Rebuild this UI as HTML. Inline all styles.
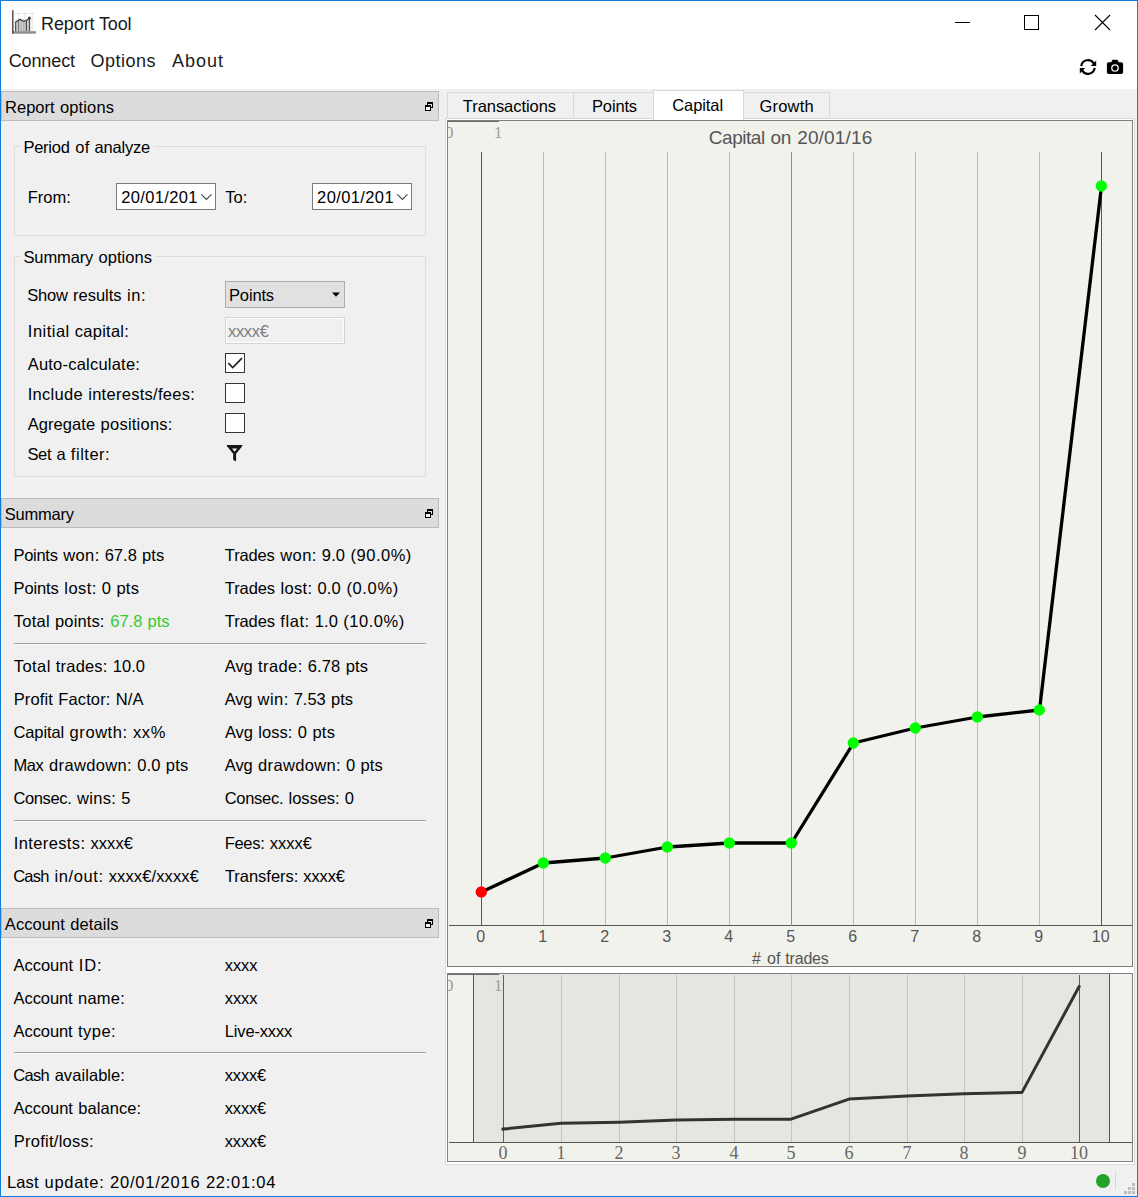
<!DOCTYPE html>
<html><head><meta charset="utf-8"><title>Report Tool</title>
<style>
html,body{margin:0;padding:0;}
body{width:1138px;height:1197px;overflow:hidden;background:#f0f0f0;font-family:"Liberation Sans",sans-serif;}
#w{position:absolute;left:0;top:0;width:1138px;height:1197px;overflow:hidden;background:#f0f0f0;}
.t{position:absolute;white-space:pre;line-height:normal;}
.b{position:absolute;box-sizing:border-box;}
svg{position:absolute;left:0;top:0;overflow:visible;}
</style></head><body><div id="w">
<div class="b" style="left:0px;top:0px;width:1138px;height:89px;background:#fff;"></div>
<div class="b" style="left:1px;top:91px;width:438px;height:30px;background:#dcdcdc;border:1px solid #bcbcbc;"></div>
<div class="b" style="left:1px;top:498px;width:438px;height:30px;background:#dcdcdc;border:1px solid #bcbcbc;"></div>
<div class="b" style="left:1px;top:908px;width:438px;height:30px;background:#dcdcdc;border:1px solid #bcbcbc;"></div>
<div class="b" style="left:14px;top:146px;width:412px;height:90px;border:1px solid #dcdcdc;"></div>
<div class="b" style="left:14px;top:256px;width:412px;height:221px;border:1px solid #dcdcdc;"></div>
<div class="b" style="left:20px;top:137px;width:134px;height:18px;background:#f0f0f0;"></div>
<div class="b" style="left:20px;top:247px;width:135px;height:18px;background:#f0f0f0;"></div>
<div class="b" style="left:116px;top:183px;width:100px;height:27px;background:#fff;border:1px solid #7a7a7a;"></div>
<div class="b" style="left:312px;top:183px;width:100px;height:27px;background:#fff;border:1px solid #7a7a7a;"></div>
<div class="b" style="left:225px;top:281px;width:120px;height:27px;background:#e1e1e1;border:1px solid #adadad;"></div>
<div class="b" style="left:225px;top:317px;width:120px;height:27px;background:#f0f0f0;border:1px solid #d4d4d4;box-shadow:inset 0 0 0 1px #fcfcfc;"></div>
<div class="b" style="left:225px;top:353px;width:20px;height:20px;background:#fff;border:1px solid #333;"></div>
<div class="b" style="left:225px;top:383px;width:20px;height:20px;background:#fff;border:1px solid #333;"></div>
<div class="b" style="left:225px;top:413px;width:20px;height:20px;background:#fff;border:1px solid #333;"></div>
<div class="b" style="left:14px;top:643px;width:412px;height:1px;background:#a0a0a0;"></div>
<div class="b" style="left:14px;top:644px;width:412px;height:1px;background:#f8f8f8;"></div>
<div class="b" style="left:14px;top:820px;width:412px;height:1px;background:#a0a0a0;"></div>
<div class="b" style="left:14px;top:821px;width:412px;height:1px;background:#f8f8f8;"></div>
<div class="b" style="left:14px;top:1052px;width:412px;height:1px;background:#a0a0a0;"></div>
<div class="b" style="left:14px;top:1053px;width:412px;height:1px;background:#f8f8f8;"></div>
<div class="b" style="left:445px;top:118px;width:690px;height:1047px;background:#fff;border:1px solid #dadada;"></div>
<div class="b" style="left:447px;top:92px;width:127px;height:27px;background:#f0f0f0;border:1px solid #d9d9d9;"></div>
<div class="b" style="left:573px;top:92px;width:82px;height:27px;background:#f0f0f0;border:1px solid #d9d9d9;"></div>
<div class="b" style="left:743px;top:92px;width:87px;height:27px;background:#f0f0f0;border:1px solid #d9d9d9;"></div>
<div class="b" style="left:653px;top:90px;width:91px;height:30px;background:#fff;border:1px solid #d9d9d9;border-bottom:none;"></div>
<div class="b" style="left:447px;top:120px;width:686px;height:847px;background:#f2f2ed;border:1px solid #7f7f7f;"></div>
<div class="b" style="left:447px;top:973px;width:686px;height:189px;background:#f2f2ed;border:1px solid #7f7f7f;"></div>
<div class="b" style="left:473px;top:974px;width:637px;height:168px;background:#e6e6e1;border-left:1px solid #555;border-right:1px solid #555;"></div>
<svg width="1138" height="1197" viewBox="0 0 1138 1197">
<rect x="481" y="152" width="1" height="774" fill="#555"/>
<rect x="543" y="152" width="1" height="774" fill="#bbbbb7"/>
<rect x="605" y="152" width="1" height="774" fill="#bbbbb7"/>
<rect x="667" y="152" width="1" height="774" fill="#bbbbb7"/>
<rect x="729" y="152" width="1" height="774" fill="#bbbbb7"/>
<rect x="853" y="152" width="1" height="774" fill="#bbbbb7"/>
<rect x="915" y="152" width="1" height="774" fill="#bbbbb7"/>
<rect x="977" y="152" width="1" height="774" fill="#bbbbb7"/>
<rect x="1039" y="152" width="1" height="774" fill="#bbbbb7"/>
<rect x="1101" y="152" width="1" height="774" fill="#555"/>
<rect x="449" y="925" width="683" height="1" fill="#555"/>
<rect x="448" y="121" width="51" height="1" fill="#6a6a6a"/>
<polyline points="481.5,892 543.5,863 605.5,858 667.5,847 729.5,843 791.5,843 853.5,743 915.5,728 977.5,717 1039.5,710 1101.5,186" fill="none" stroke="#000" stroke-width="3.3" stroke-linejoin="round" stroke-linecap="round"/>
<circle cx="481.3" cy="892" r="5.7" fill="#ff0000"/>
<circle cx="543.3" cy="863" r="5.7" fill="#00ff00"/>
<circle cx="605.3" cy="858" r="5.7" fill="#00ff00"/>
<circle cx="667.3" cy="847" r="5.7" fill="#00ff00"/>
<circle cx="729.3" cy="843" r="5.7" fill="#00ff00"/>
<circle cx="791.3" cy="843" r="5.7" fill="#00ff00"/>
<circle cx="853.3" cy="743" r="5.7" fill="#00ff00"/>
<circle cx="915.3" cy="728" r="5.7" fill="#00ff00"/>
<circle cx="977.3" cy="717" r="5.7" fill="#00ff00"/>
<circle cx="1039.3" cy="710" r="5.7" fill="#00ff00"/>
<circle cx="1101.3" cy="186" r="5.7" fill="#00ff00"/>
<rect x="791" y="152" width="1" height="774" fill="#ff5a6e"/>
<rect x="503" y="975" width="1" height="168" fill="#5c5c5c"/>
<rect x="561" y="975" width="1" height="168" fill="#c3c3bf"/>
<rect x="619" y="975" width="1" height="168" fill="#c3c3bf"/>
<rect x="676" y="975" width="1" height="168" fill="#c3c3bf"/>
<rect x="734" y="975" width="1" height="168" fill="#c3c3bf"/>
<rect x="791" y="975" width="1" height="168" fill="#c3c3bf"/>
<rect x="849" y="975" width="1" height="168" fill="#c3c3bf"/>
<rect x="907" y="975" width="1" height="168" fill="#c3c3bf"/>
<rect x="964" y="975" width="1" height="168" fill="#c3c3bf"/>
<rect x="1022" y="975" width="1" height="168" fill="#c3c3bf"/>
<rect x="1079" y="975" width="1" height="168" fill="#5c5c5c"/>
<rect x="449" y="1142" width="683" height="1" fill="#555"/>
<rect x="448" y="974" width="51" height="1" fill="#6a6a6a"/>
<polyline points="503.0,1129.1 561.0,1123.3 619.0,1122.2 676.0,1120.0 734.0,1119.2 791.0,1119.2 849.0,1099.1 907.0,1096.0 964.0,1093.8 1022.0,1092.4 1079.0,986.8" fill="none" stroke="#333" stroke-width="3" stroke-linejoin="round" stroke-linecap="square"/>
<g fill="none"><path d="M18.400 12v19M24.600 12v19M32.200 12v19M14 13.500h20M14 19.500h20M14 27.100h20" stroke="#e6e6e6" stroke-width="1"/><path d="M15 22.500l5-3.200l3.700 2l2.600-.6l3.100-2.700l.6 13.300h-15z" fill="#cfcfcf"/><path d="M15.600 22.500v9M26.400 20.800v10.500M29.500 19v12.300" stroke="#555" stroke-width="1.300"/><path d="M18.500 20.500v11" stroke="#7a7a7a" stroke-width="1.200"/><path d="M21.200 20.500v11M23.800 21.200v10" stroke="#aaa" stroke-width="1.200"/><rect x="12" y="31.200" width="24" height="2.500" fill="#8e8e8e"/><rect x="12.100" y="10.200" width="1.400" height="23.500" fill="#484848"/><path d="M15 22.500l5-3.200l3.700 2l2.600-.6l3.100-2.800" stroke="#4a4a4a" stroke-width="1.400"/><circle cx="29.400" cy="18" r="1.500" fill="#3a3a3a"/></g>
<rect x="955" y="22" width="15" height="1" fill="#000"/>
<rect x="1024.5" y="15.5" width="14" height="14" fill="none" stroke="#000" stroke-width="1"/>
<path d="M1095 15l15 15M1110 15l-15 15" stroke="#000" stroke-width="1.1" fill="none"/>
<g fill="none" stroke="#000" stroke-width="2.1"><path d="M1081.270 66.050a6.800 6.800 0 0 1 12.620-2.450"/><path d="M1094.730 67.950a6.800 6.800 0 0 1 -12.620 2.450"/></g><path d="M1096.200 60.600v5.400h-5.400z" fill="#000"/><path d="M1079.800 73.400v-5.400h5.400z" fill="#000"/>
<path d="M1108.6 62.2h2.6l1.1-2.1q.2-.4.7-.4h4q.5 0 .7.4l1.1 2.100h2.600q1.700 0 1.700 1.700v8.400q0 1.700-1.700 1.700h-12.800q-1.700 0-1.700-1.700v-8.400q0-1.700 1.700-1.700z" fill="#000"/><circle cx="1115" cy="68" r="3.2" fill="none" stroke="#fff" stroke-width="1.3"/>
<g fill="none" stroke="#000" stroke-width="1"><rect x="427.5" y="102.5" width="5" height="5"/><rect x="427" y="102" width="6" height="2" fill="#000" stroke="none"/><rect x="425.5" y="105.5" width="5" height="5" fill="#f4f4f4"/><rect x="425" y="105" width="6" height="2" fill="#000" stroke="none"/></g>
<g fill="none" stroke="#000" stroke-width="1"><rect x="427.5" y="509.5" width="5" height="5"/><rect x="427" y="509" width="6" height="2" fill="#000" stroke="none"/><rect x="425.5" y="512.5" width="5" height="5" fill="#f4f4f4"/><rect x="425" y="512" width="6" height="2" fill="#000" stroke="none"/></g>
<g fill="none" stroke="#000" stroke-width="1"><rect x="427.5" y="919.5" width="5" height="5"/><rect x="427" y="919" width="6" height="2" fill="#000" stroke="none"/><rect x="425.5" y="922.5" width="5" height="5" fill="#f4f4f4"/><rect x="425" y="922" width="6" height="2" fill="#000" stroke="none"/></g>
<path d="M201.3 194.300l5.100 5.100l5.100-5.100" fill="none" stroke="#444" stroke-width="1.1"/>
<path d="M397.3 194.300l5.100 5.100l5.100-5.100" fill="none" stroke="#444" stroke-width="1.1"/>
<path d="M332 292.500h8l-4 4.200z" fill="#000"/>
<path d="M228.300 363.200l4.400 4.300l9.300-9.300" fill="none" stroke="#222" stroke-width="1.7"/>
<path d="M227.300 445h14.500q.6 0 .6 .6v.5l-6.300 7.600v7q0 .7-.8 .4l-1.600-.9q-.5-.3-.5-.9v-5.600l-6.400-7.600v-.5q0-.6.5-.6z" fill="#161616"/><path d="M232 448.500h5.200l-2.600 3.300z" fill="#f0f0f0"/>
<circle cx="1103" cy="1181" r="7" fill="#22a228"/>
<rect x="1115" y="1171" width="1" height="19" fill="#d8d8d8"/>
<rect x="1132" y="1183" width="3" height="3" fill="#bfbfbf"/>
<rect x="1128" y="1187" width="3" height="3" fill="#bfbfbf"/>
<rect x="1132" y="1187" width="3" height="3" fill="#bfbfbf"/>
<rect x="1124" y="1191" width="3" height="3" fill="#bfbfbf"/>
<rect x="1128" y="1191" width="3" height="3" fill="#bfbfbf"/>
<rect x="1132" y="1191" width="3" height="3" fill="#bfbfbf"/>
</svg>
<span class="t" style="left:41.10px;top:13.71px;font-size:18px;letter-spacing:-0.125px;color:#1a1a1a;font-family:'Liberation Sans',sans-serif;">Report Tool</span>
<span class="t" style="left:8.70px;top:50.71px;font-size:18px;letter-spacing:-0.117px;color:#1a1a1a;font-family:'Liberation Sans',sans-serif;">Connect</span>
<span class="t" style="left:90.40px;top:50.71px;font-size:18px;letter-spacing:0.517px;color:#1a1a1a;font-family:'Liberation Sans',sans-serif;">Options</span>
<span class="t" style="left:171.90px;top:50.71px;font-size:18px;letter-spacing:1.025px;color:#1a1a1a;font-family:'Liberation Sans',sans-serif;">About</span>
<span class="t" style="left:5.10px;top:98.07px;font-size:16.5px;letter-spacing:0.004px;color:#000;">Report</span><span class="t" style="left:59.98px;top:98.07px;font-size:16.5px;letter-spacing:0.126px;color:#000;">options</span>
<span class="t" style="left:4.70px;top:505.07px;font-size:16.5px;letter-spacing:-0.199px;color:#000;">Summary</span>
<span class="t" style="left:4.83px;top:915.07px;font-size:16.5px;letter-spacing:0.051px;color:#000;">Account</span><span class="t" style="left:70.16px;top:915.07px;font-size:16.5px;letter-spacing:0.115px;color:#000;">details</span>
<span class="t" style="left:23.38px;top:138.07px;font-size:16.5px;letter-spacing:-0.233px;color:#000;">Period</span><span class="t" style="left:75.19px;top:138.07px;font-size:16.5px;letter-spacing:0.316px;color:#000;">of</span><span class="t" style="left:94.55px;top:138.07px;font-size:16.5px;letter-spacing:-0.211px;color:#000;">analyze</span>
<span class="t" style="left:23.44px;top:248.07px;font-size:16.5px;letter-spacing:-0.120px;color:#000;">Summary</span><span class="t" style="left:98.49px;top:248.07px;font-size:16.5px;letter-spacing:0.048px;color:#000;">options</span>
<span class="t" style="left:27.63px;top:188.07px;font-size:16.5px;letter-spacing:0.057px;color:#000;">From:</span>
<span class="t" style="left:121.27px;top:188.07px;font-size:16.5px;letter-spacing:0.339px;color:#000;">20/01/201</span>
<span class="t" style="left:225.16px;top:188.07px;font-size:16.5px;letter-spacing:0.116px;color:#000;">To:</span>
<span class="t" style="left:317.09px;top:188.07px;font-size:16.5px;letter-spacing:0.384px;color:#000;">20/01/201</span>
<span class="t" style="left:27.37px;top:286.07px;font-size:16.5px;letter-spacing:-0.257px;color:#000;">Show</span><span class="t" style="left:72.98px;top:286.07px;font-size:16.5px;letter-spacing:0.004px;color:#000;">results</span><span class="t" style="left:127.12px;top:286.07px;font-size:16.5px;letter-spacing:0.564px;color:#000;">in:</span>
<span class="t" style="left:229.02px;top:286.07px;font-size:16.5px;letter-spacing:-0.160px;color:#000;">Points</span>
<span class="t" style="left:27.84px;top:322.07px;font-size:16.5px;letter-spacing:0.475px;color:#000;">Initial</span><span class="t" style="left:74.84px;top:322.07px;font-size:16.5px;letter-spacing:0.245px;color:#000;">capital:</span>
<span class="t" style="left:227.95px;top:322.07px;font-size:16.5px;letter-spacing:-0.305px;color:#7e7e7e;">xxxx€</span>
<span class="t" style="left:27.71px;top:355.07px;font-size:16.5px;letter-spacing:0.215px;color:#000;">Auto-calculate:</span>
<span class="t" style="left:27.74px;top:385.07px;font-size:16.5px;letter-spacing:0.282px;color:#000;">Include</span><span class="t" style="left:88.20px;top:385.07px;font-size:16.5px;letter-spacing:0.279px;color:#000;">interests/fees:</span>
<span class="t" style="left:27.64px;top:415.07px;font-size:16.5px;letter-spacing:0.078px;color:#000;">Agregate</span><span class="t" style="left:100.61px;top:415.07px;font-size:16.5px;letter-spacing:0.226px;color:#000;">positions:</span>
<span class="t" style="left:27.43px;top:445.07px;font-size:16.5px;letter-spacing:-0.338px;color:#000;">Set</span><span class="t" style="left:56.39px;top:445.07px;font-size:16.5px;letter-spacing:-0.382px;color:#000;">a</span><span class="t" style="left:70.87px;top:445.07px;font-size:16.5px;letter-spacing:0.513px;color:#000;">filter:</span>
<span class="t" style="left:13.46px;top:546.07px;font-size:16.5px;letter-spacing:-0.279px;color:#000;">Points</span><span class="t" style="left:63.18px;top:546.07px;font-size:16.5px;letter-spacing:0.412px;color:#000;">won:</span><span class="t" style="left:104.67px;top:546.07px;font-size:16.5px;letter-spacing:0.026px;color:#000;">67.8</span><span class="t" style="left:142.08px;top:546.07px;font-size:16.5px;letter-spacing:0.044px;color:#000;">pts</span>
<span class="t" style="left:224.83px;top:546.07px;font-size:16.5px;letter-spacing:-0.139px;color:#000;">Trades</span><span class="t" style="left:280.23px;top:546.07px;font-size:16.5px;letter-spacing:0.441px;color:#000;">won:</span><span class="t" style="left:321.87px;top:546.07px;font-size:16.5px;letter-spacing:0.097px;color:#000;">9.0</span><span class="t" style="left:350.51px;top:546.07px;font-size:16.5px;letter-spacing:0.510px;color:#000;">(90.0%)</span>
<span class="t" style="left:13.54px;top:579.07px;font-size:16.5px;letter-spacing:-0.111px;color:#000;">Points</span><span class="t" style="left:64.31px;top:579.07px;font-size:16.5px;letter-spacing:0.423px;color:#000;">lost:</span><span class="t" style="left:101.82px;top:579.07px;font-size:16.5px;letter-spacing:0.094px;color:#000;">0</span><span class="t" style="left:116.46px;top:579.07px;font-size:16.5px;letter-spacing:0.212px;color:#000;">pts</span>
<span class="t" style="left:224.85px;top:579.07px;font-size:16.5px;letter-spacing:-0.094px;color:#000;">Trades</span><span class="t" style="left:280.48px;top:579.07px;font-size:16.5px;letter-spacing:0.334px;color:#000;">lost:</span><span class="t" style="left:317.54px;top:579.07px;font-size:16.5px;letter-spacing:0.140px;color:#000;">0.0</span><span class="t" style="left:346.38px;top:579.07px;font-size:16.5px;letter-spacing:0.657px;color:#000;">(0.0%)</span>
<span class="t" style="left:13.74px;top:612.07px;font-size:16.5px;letter-spacing:0.290px;color:#000;">Total</span><span class="t" style="left:55.08px;top:612.07px;font-size:16.5px;letter-spacing:0.118px;color:#000;">points:</span>
<span class="t" style="left:224.84px;top:612.07px;font-size:16.5px;letter-spacing:-0.128px;color:#000;">Trades</span><span class="t" style="left:280.35px;top:612.07px;font-size:16.5px;letter-spacing:0.544px;color:#000;">flat:</span><span class="t" style="left:314.66px;top:612.07px;font-size:16.5px;letter-spacing:0.108px;color:#000;">1.0</span><span class="t" style="left:343.33px;top:612.07px;font-size:16.5px;letter-spacing:0.522px;color:#000;">(10.0%)</span>
<span class="t" style="left:13.81px;top:657.07px;font-size:16.5px;letter-spacing:0.421px;color:#000;">Total</span><span class="t" style="left:55.86px;top:657.07px;font-size:16.5px;letter-spacing:0.180px;color:#000;">trades:</span><span class="t" style="left:112.71px;top:657.07px;font-size:16.5px;letter-spacing:0.065px;color:#000;">10.0</span>
<span class="t" style="left:224.83px;top:657.07px;font-size:16.5px;letter-spacing:-0.131px;color:#000;">Avg</span><span class="t" style="left:258.09px;top:657.07px;font-size:16.5px;letter-spacing:0.398px;color:#000;">trade:</span><span class="t" style="left:307.78px;top:657.07px;font-size:16.5px;letter-spacing:0.126px;color:#000;">6.78</span><span class="t" style="left:345.65px;top:657.07px;font-size:16.5px;letter-spacing:0.135px;color:#000;">pts</span>
<span class="t" style="left:13.67px;top:690.07px;font-size:16.5px;letter-spacing:0.137px;color:#000;">Profit</span><span class="t" style="left:58.27px;top:690.07px;font-size:16.5px;letter-spacing:0.127px;color:#000;">Factor:</span><span class="t" style="left:115.75px;top:690.07px;font-size:16.5px;letter-spacing:0.099px;color:#000;">N/A</span>
<span class="t" style="left:224.76px;top:690.07px;font-size:16.5px;letter-spacing:-0.279px;color:#000;">Avg</span><span class="t" style="left:257.59px;top:690.07px;font-size:16.5px;letter-spacing:0.455px;color:#000;">win:</span><span class="t" style="left:293.69px;top:690.07px;font-size:16.5px;letter-spacing:-0.006px;color:#000;">7.53</span><span class="t" style="left:330.95px;top:690.07px;font-size:16.5px;letter-spacing:0.015px;color:#000;">pts</span>
<span class="t" style="left:13.54px;top:723.07px;font-size:16.5px;letter-spacing:-0.129px;color:#000;">Capital</span><span class="t" style="left:69.60px;top:723.07px;font-size:16.5px;letter-spacing:0.562px;color:#000;">growth:</span><span class="t" style="left:132.95px;top:723.07px;font-size:16.5px;letter-spacing:0.652px;color:#000;">xx%</span>
<span class="t" style="left:224.88px;top:723.07px;font-size:16.5px;letter-spacing:-0.039px;color:#000;">Avg</span><span class="t" style="left:258.25px;top:723.07px;font-size:16.5px;letter-spacing:0.070px;color:#000;">loss:</span><span class="t" style="left:297.84px;top:723.07px;font-size:16.5px;letter-spacing:0.089px;color:#000;">0</span><span class="t" style="left:312.47px;top:723.07px;font-size:16.5px;letter-spacing:0.209px;color:#000;">pts</span>
<span class="t" style="left:13.42px;top:756.07px;font-size:16.5px;letter-spacing:-0.364px;color:#000;">Max</span><span class="t" style="left:49.10px;top:756.07px;font-size:16.5px;letter-spacing:0.347px;color:#000;">drawdown:</span><span class="t" style="left:137.18px;top:756.07px;font-size:16.5px;letter-spacing:0.169px;color:#000;">0.0</span><span class="t" style="left:165.85px;top:756.07px;font-size:16.5px;letter-spacing:0.136px;color:#000;">pts</span>
<span class="t" style="left:224.83px;top:756.07px;font-size:16.5px;letter-spacing:-0.136px;color:#000;">Avg</span><span class="t" style="left:258.04px;top:756.07px;font-size:16.5px;letter-spacing:0.341px;color:#000;">drawdown:</span><span class="t" style="left:345.98px;top:756.07px;font-size:16.5px;letter-spacing:-0.007px;color:#000;">0</span><span class="t" style="left:360.46px;top:756.07px;font-size:16.5px;letter-spacing:0.131px;color:#000;">pts</span>
<span class="t" style="left:13.42px;top:789.07px;font-size:16.5px;letter-spacing:-0.368px;color:#000;">Consec.</span><span class="t" style="left:76.98px;top:789.07px;font-size:16.5px;letter-spacing:0.337px;color:#000;">wins:</span><span class="t" style="left:121.37px;top:789.07px;font-size:16.5px;letter-spacing:0.020px;color:#000;">5</span>
<span class="t" style="left:224.75px;top:789.07px;font-size:16.5px;letter-spacing:-0.300px;color:#000;">Consec.</span><span class="t" style="left:288.60px;top:789.07px;font-size:16.5px;letter-spacing:-0.073px;color:#000;">losses:</span><span class="t" style="left:344.83px;top:789.07px;font-size:16.5px;letter-spacing:0.095px;color:#000;">0</span>
<span class="t" style="left:13.79px;top:834.07px;font-size:16.5px;letter-spacing:0.377px;color:#000;">Interests:</span><span class="t" style="left:90.51px;top:834.07px;font-size:16.5px;letter-spacing:0.058px;color:#000;">xxxx€</span>
<span class="t" style="left:224.74px;top:834.07px;font-size:16.5px;letter-spacing:-0.312px;color:#000;">Fees:</span><span class="t" style="left:269.83px;top:834.07px;font-size:16.5px;letter-spacing:0.010px;color:#000;">xxxx€</span>
<span class="t" style="left:13.21px;top:867.07px;font-size:16.5px;letter-spacing:-0.772px;color:#000;">Cash</span><span class="t" style="left:54.53px;top:867.07px;font-size:16.5px;letter-spacing:0.605px;color:#000;">in/out:</span><span class="t" style="left:108.67px;top:867.07px;font-size:16.5px;letter-spacing:0.128px;color:#000;">xxxx€/xxxx€</span>
<span class="t" style="left:224.89px;top:867.07px;font-size:16.5px;letter-spacing:-0.023px;color:#000;">Transfers:</span><span class="t" style="left:303.37px;top:867.07px;font-size:16.5px;letter-spacing:-0.154px;color:#000;">xxxx€</span>
<span class="t" style="left:13.58px;top:956.07px;font-size:16.5px;letter-spacing:-0.036px;color:#000;">Account</span><span class="t" style="left:78.68px;top:956.07px;font-size:16.5px;letter-spacing:0.878px;color:#000;">ID:</span>
<span class="t" style="left:224.84px;top:956.07px;font-size:16.5px;letter-spacing:-0.125px;color:#000;">xxxx</span>
<span class="t" style="left:13.56px;top:989.07px;font-size:16.5px;letter-spacing:-0.082px;color:#000;">Account</span><span class="t" style="left:78.01px;top:989.07px;font-size:16.5px;letter-spacing:0.243px;color:#000;">name:</span>
<span class="t" style="left:224.84px;top:989.07px;font-size:16.5px;letter-spacing:-0.125px;color:#000;">xxxx</span>
<span class="t" style="left:13.56px;top:1022.07px;font-size:16.5px;letter-spacing:-0.088px;color:#000;">Account</span><span class="t" style="left:78.07px;top:1022.07px;font-size:16.5px;letter-spacing:0.449px;color:#000;">type:</span>
<span class="t" style="left:224.82px;top:1022.07px;font-size:16.5px;letter-spacing:-0.162px;color:#000;">Live-xxxx</span>
<span class="t" style="left:13.25px;top:1066.07px;font-size:16.5px;letter-spacing:-0.691px;color:#000;">Cash</span><span class="t" style="left:54.63px;top:1066.07px;font-size:16.5px;letter-spacing:0.065px;color:#000;">available:</span>
<span class="t" style="left:224.80px;top:1066.07px;font-size:16.5px;letter-spacing:-0.205px;color:#000;">xxxx€</span>
<span class="t" style="left:13.58px;top:1099.07px;font-size:16.5px;letter-spacing:-0.042px;color:#000;">Account</span><span class="t" style="left:78.23px;top:1099.07px;font-size:16.5px;letter-spacing:0.073px;color:#000;">balance:</span>
<span class="t" style="left:224.80px;top:1099.07px;font-size:16.5px;letter-spacing:-0.205px;color:#000;">xxxx€</span>
<span class="t" style="left:13.73px;top:1132.07px;font-size:16.5px;letter-spacing:0.262px;color:#000;">Profit/loss:</span>
<span class="t" style="left:224.80px;top:1132.07px;font-size:16.5px;letter-spacing:-0.205px;color:#000;">xxxx€</span>
<span class="t" style="left:110.29px;top:612.07px;font-size:16.5px;letter-spacing:-0.020px;color:#33cc33;">67.8</span><span class="t" style="left:147.49px;top:612.07px;font-size:16.5px;letter-spacing:0.001px;color:#33cc33;">pts</span>
<span class="t" style="left:6.97px;top:1173.07px;font-size:16.5px;letter-spacing:0.149px;color:#000;">Last</span><span class="t" style="left:44.54px;top:1173.07px;font-size:16.5px;letter-spacing:0.703px;color:#000;">update:</span><span class="t" style="left:110.05px;top:1173.07px;font-size:16.5px;letter-spacing:0.783px;color:#000;">20/01/2016</span><span class="t" style="left:205.94px;top:1173.07px;font-size:16.5px;letter-spacing:0.745px;color:#000;">22:01:04</span>
<span class="t" style="left:462.87px;top:97.07px;font-size:16.5px;letter-spacing:-0.062px;color:#000;">Transactions</span>
<span class="t" style="left:592.02px;top:97.07px;font-size:16.5px;letter-spacing:-0.160px;color:#000;">Points</span>
<span class="t" style="left:672.26px;top:96.07px;font-size:16.5px;letter-spacing:-0.088px;color:#000;">Capital</span>
<span class="t" style="left:759.41px;top:97.07px;font-size:16.5px;letter-spacing:0.212px;color:#000;">Growth</span>
<span class="t" style="left:708.86px;top:126.81px;font-size:19px;letter-spacing:-0.475px;color:#555;">Capital</span><span class="t" style="left:770.58px;top:126.81px;font-size:19px;letter-spacing:-0.310px;color:#555;">on</span><span class="t" style="left:797.16px;top:126.81px;font-size:19px;letter-spacing:0.164px;color:#555;">20/01/16</span>
<span class="t" style="left:476.26px;top:927.52px;font-size:16px;letter-spacing:0.000px;color:#555;font-family:'Liberation Sans',sans-serif;">0</span>
<span class="t" style="left:538.26px;top:927.52px;font-size:16px;letter-spacing:0.000px;color:#555;font-family:'Liberation Sans',sans-serif;">1</span>
<span class="t" style="left:600.26px;top:927.52px;font-size:16px;letter-spacing:0.000px;color:#555;font-family:'Liberation Sans',sans-serif;">2</span>
<span class="t" style="left:662.26px;top:927.52px;font-size:16px;letter-spacing:0.000px;color:#555;font-family:'Liberation Sans',sans-serif;">3</span>
<span class="t" style="left:724.26px;top:927.52px;font-size:16px;letter-spacing:0.000px;color:#555;font-family:'Liberation Sans',sans-serif;">4</span>
<span class="t" style="left:786.26px;top:927.52px;font-size:16px;letter-spacing:0.000px;color:#555;font-family:'Liberation Sans',sans-serif;">5</span>
<span class="t" style="left:848.26px;top:927.52px;font-size:16px;letter-spacing:0.000px;color:#555;font-family:'Liberation Sans',sans-serif;">6</span>
<span class="t" style="left:910.26px;top:927.52px;font-size:16px;letter-spacing:0.000px;color:#555;font-family:'Liberation Sans',sans-serif;">7</span>
<span class="t" style="left:972.26px;top:927.52px;font-size:16px;letter-spacing:0.000px;color:#555;font-family:'Liberation Sans',sans-serif;">8</span>
<span class="t" style="left:1034.26px;top:927.52px;font-size:16px;letter-spacing:0.000px;color:#555;font-family:'Liberation Sans',sans-serif;">9</span>
<span class="t" style="left:1091.83px;top:927.52px;font-size:16px;letter-spacing:0.000px;color:#555;font-family:'Liberation Sans',sans-serif;">10</span>
<span class="t" style="left:751.88px;top:949.52px;font-size:16px;letter-spacing:2.569px;color:#555;">#</span><span class="t" style="left:767.04px;top:949.52px;font-size:16px;letter-spacing:0.094px;color:#555;">of</span><span class="t" style="left:785.34px;top:949.52px;font-size:16px;letter-spacing:-0.202px;color:#555;">trades</span>
<span class="t" style="left:498.40px;top:1142.96px;font-size:18px;letter-spacing:0.000px;color:#666;font-family:'Liberation Serif',serif;">0</span>
<span class="t" style="left:556.40px;top:1142.96px;font-size:18px;letter-spacing:0.000px;color:#666;font-family:'Liberation Serif',serif;">1</span>
<span class="t" style="left:614.40px;top:1142.96px;font-size:18px;letter-spacing:0.000px;color:#666;font-family:'Liberation Serif',serif;">2</span>
<span class="t" style="left:671.40px;top:1142.96px;font-size:18px;letter-spacing:0.000px;color:#666;font-family:'Liberation Serif',serif;">3</span>
<span class="t" style="left:729.40px;top:1142.96px;font-size:18px;letter-spacing:0.000px;color:#666;font-family:'Liberation Serif',serif;">4</span>
<span class="t" style="left:786.40px;top:1142.96px;font-size:18px;letter-spacing:0.000px;color:#666;font-family:'Liberation Serif',serif;">5</span>
<span class="t" style="left:844.40px;top:1142.96px;font-size:18px;letter-spacing:0.000px;color:#666;font-family:'Liberation Serif',serif;">6</span>
<span class="t" style="left:902.40px;top:1142.96px;font-size:18px;letter-spacing:0.000px;color:#666;font-family:'Liberation Serif',serif;">7</span>
<span class="t" style="left:959.40px;top:1142.96px;font-size:18px;letter-spacing:0.000px;color:#666;font-family:'Liberation Serif',serif;">8</span>
<span class="t" style="left:1017.40px;top:1142.96px;font-size:18px;letter-spacing:0.000px;color:#666;font-family:'Liberation Serif',serif;">9</span>
<span class="t" style="left:1069.90px;top:1142.96px;font-size:18px;letter-spacing:0.000px;color:#666;font-family:'Liberation Serif',serif;">10</span>
<span class="t" style="left:493.70px;top:122.41px;font-size:17.5px;letter-spacing:0.000px;color:#a0a0a0;font-family:'Liberation Serif',serif;">1</span>
<span class="t" style="left:493.70px;top:975.41px;font-size:17.5px;letter-spacing:0.000px;color:#a0a0a0;font-family:'Liberation Serif',serif;">1</span>
<div class="b" style="left:448px;top:121px;width:6px;height:20px;overflow:hidden;"><span class="t" style="left:-3.30px;top:1.41px;font-size:17.5px;letter-spacing:0.000px;color:#999;font-family:'Liberation Serif',serif;">0</span>
</div>
<div class="b" style="left:448px;top:974px;width:6px;height:20px;overflow:hidden;"><span class="t" style="left:-3.30px;top:1.41px;font-size:17.5px;letter-spacing:0.000px;color:#999;font-family:'Liberation Serif',serif;">0</span>
</div>
<div class="b" style="left:0px;top:0px;width:1138px;height:1197px;border:1px solid #0f7cd6;"></div>
</div></body></html>
